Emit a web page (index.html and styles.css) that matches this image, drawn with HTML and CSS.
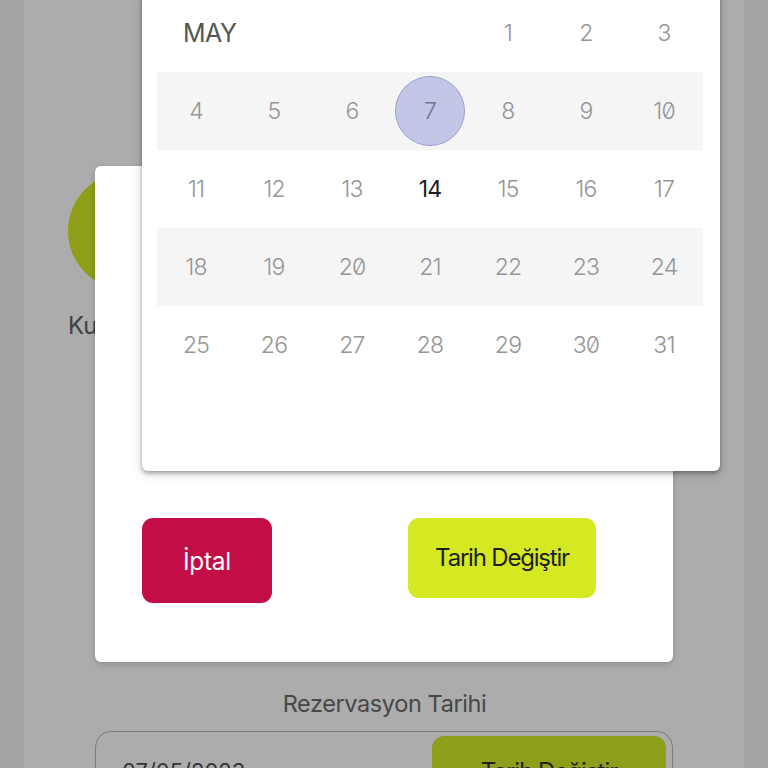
FILE: index.html
```html
<!DOCTYPE html>
<html lang="tr">
<head>
<meta charset="utf-8">
<title>Rezervasyon</title>
<link rel="stylesheet" href="styles.css">
</head>
<body>
<div class="screen">
  <div class="profile">
    <div class="avatar"></div>
    <div class="name">Kullanıcı</div>
  </div>
  <div class="section">
    <div class="label">Rezervasyon Tarihi</div>
    <div class="field">
      <span class="date">07/05/2023</span>
      <button class="field-btn">Tarih Değiştir</button>
    </div>
  </div>
</div>

<div class="dialog">
  <div class="actions">
    <button class="btn btn-cancel">İptal</button>
    <button class="btn btn-change">Tarih Değiştir</button>
  </div>
</div>

<div class="picker">
  <div class="grid">
    <div class="month">MAY</div>
    <div class="day">1</div><div class="day">2</div><div class="day">3</div>

    <div class="day band">4</div><div class="day band">5</div><div class="day band">6</div>
    <div class="day band"><span class="sel">7</span></div>
    <div class="day band">8</div><div class="day band">9</div><div class="day band">10</div>

    <div class="day">11</div><div class="day">12</div><div class="day">13</div>
    <div class="day today">14</div>
    <div class="day">15</div><div class="day">16</div><div class="day">17</div>

    <div class="day band">18</div><div class="day band">19</div><div class="day band">20</div>
    <div class="day band">21</div><div class="day band">22</div><div class="day band">23</div><div class="day band">24</div>

    <div class="day">25</div><div class="day">26</div><div class="day">27</div>
    <div class="day">28</div><div class="day">29</div><div class="day">30</div><div class="day">31</div>
  </div>
</div>
</body>
</html>
```

FILE: styles.css
```css
* { box-sizing: border-box; }

html, body {
  margin: 0;
  height: 768px;
  overflow: hidden;
}

body {
  background: #a4a4a6;
  font-family: Inter, "Noto Sans", "Liberation Sans", sans-serif;
  position: relative;
}

.screen {
  margin: 0 24px;
  height: 768px;
  background: #acacac;
  padding-top: 172px;
  border-left: 1px solid #b0b0b1;
}

.profile {
  margin-left: 43px;
  width: 118px;
}

.avatar {
  width: 118px;
  height: 118px;
  border-radius: 50%;
  background: #8e9e19;
}

.name {
  margin-top: 22px;
  font-size: 24px;
  line-height: 28px;
  color: #404040;
  white-space: nowrap;
}

.section {
  margin-top: 350px;
}

.label {
  text-align: center;
  font-size: 23.5px;
  line-height: 27px;
  color: #474747;
  letter-spacing: -0.4px;
  margin-bottom: 14px;
}

.field {
  margin-left: 70px;
  width: 578px;
  height: 80px;
  border: 1px solid #7c7c7c;
  border-radius: 16px;
  display: flex;
  align-items: flex-start;
  justify-content: space-between;
  padding: 4px 6px 0 26px;
}

.date {
  margin-top: 22px;
  font-size: 22px;
  color: #333;
}

.field-btn {
  width: 234px;
  height: 70px;
  border: none;
  border-radius: 12px;
  background: #8c9e1a;
  font-family: inherit;
  font-size: 24px;
  letter-spacing: -1px;
  color: #222;
  padding-top: 2px;
}

/* dialog */
.dialog {
  position: absolute;
  left: 95px;
  top: 166px;
  width: 578px;
  height: 496px;
  background: #fff;
  border-radius: 6px;
  box-shadow: 0 2px 6px rgba(0,0,0,0.18);
}

.actions {
  display: flex;
  justify-content: space-between;
  align-items: flex-start;
  padding: 352px 77px 0 47px;
}

.btn {
  border: none;
  font-family: inherit;
  cursor: pointer;
}

.btn-cancel {
  width: 130px;
  height: 85px;
  border-radius: 11px;
  background: #c20d47;
  color: #fff;
  font-size: 24.5px;
  letter-spacing: -0.3px;
  padding-top: 2px;
}

.btn-change {
  width: 188px;
  height: 80px;
  border-radius: 11px;
  background: #d4e922;
  color: #1e1e1e;
  font-size: 24px;
  letter-spacing: -1.2px;
  padding-bottom: 2px;
}

/* date picker */
.picker {
  position: absolute;
  left: 142px;
  top: -8px;
  width: 578px;
  height: 479px;
  background: #fff;
  border-radius: 6px;
  box-shadow: 0 2px 4px rgba(0,0,0,0.35), 0 4px 12px rgba(0,0,0,0.12);
  padding: 2px 17px 0 15px;
}

.grid {
  display: grid;
  grid-template-columns: repeat(7, 78px);
  grid-auto-rows: 78px;
  font-feature-settings: "zero" 1;
}

.month {
  grid-column: 1 / span 4;
  display: flex;
  align-items: center;
  padding-left: 26px;
  font-size: 25px;
  color: #555;
  letter-spacing: -0.5px;
}

.day {
  display: flex;
  align-items: center;
  justify-content: center;
  font-size: 23px;
  font-weight: 300;
  color: #959595;
  letter-spacing: -0.8px;
}

.band {
  background: #f5f5f5;
}

.today {
  color: #1e1e1e;
  font-weight: 400;
}

.sel {
  width: 70px;
  height: 70px;
  border-radius: 50%;
  background: #c3c6e7;
  border: 1px solid #9aa0cc;
  display: flex;
  align-items: center;
  justify-content: center;
  color: #75758a;
}
```
